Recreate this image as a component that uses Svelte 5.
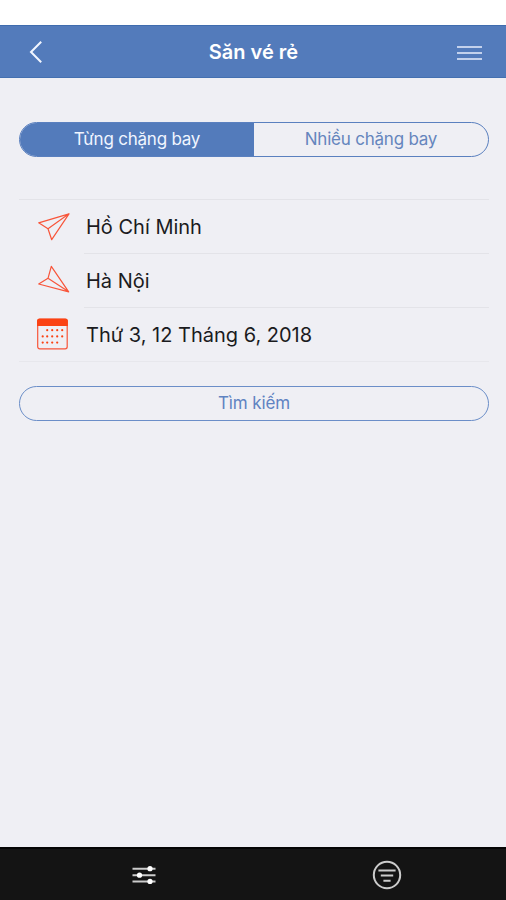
<script lang="ts">
    let mode = $state('single');

    const tabs = [
        { id: 'single', label: 'Từng chặng bay' },
        { id: 'multi', label: 'Nhiều chặng bay' },
    ];

    const rows = [
        { icon: 'depart', text: 'Hồ Chí Minh' },
        { icon: 'arrive', text: 'Hà Nội' },
        { icon: 'calendar', text: 'Thứ 3, 12 Tháng 6, 2018' },
    ];

    // columns and rows of the calendar icon's day dots
    const dots = [
        [10.5, 15.5, 20.5, 25.5],
        [6, 10.5, 15.5, 20.5, 25.5],
        [6, 10.5, 15.5, 20.5],
    ];
</script>

<div class="screen">
    <div class="status"></div>

    <header class="navbar">
        <button class="nav-btn back" aria-label="Back">
            <svg width="16" height="24" viewBox="0 0 16 24">
                <path d="M14.2 1.8 L4 12 L14.2 22.2" />
            </svg>
        </button>
        <h1>Săn vé rẻ</h1>
        <button class="nav-btn menu" aria-label="Menu">
            <span></span>
            <span></span>
            <span></span>
        </button>
    </header>

    <main>
        <div class="segment">
            {#each tabs as tab}
                <button class="tab" class:active={mode === tab.id} onclick={() => mode = tab.id}>{tab.label}</button>
            {/each}
        </div>

        <div class="list">
            {#each rows as row}
                <div class="row">
                    <svg class="icon" width="34" height="34" viewBox="0 0 34 34" aria-hidden="true">
                        {#if row.icon === 'depart'}
                            <path d="M33 3.8 L2.7 12.8 L12 18.7 L15.7 29.7 Z M12 18.7 L33 3.8" />
                        {:else if row.icon === 'arrive'}
                            <path d="M32.7 27.8 L2.7 20 L12 14.3 L15.3 2.3 Z M12 14.3 L32.7 27.8" />
                        {:else}
                            <rect x="1.7" y="2.4" width="29.5" height="29.4" rx="2" />
                            <path class="fill" d="M1 8.9 V4.1 Q1 1.6 3.5 1.6 H29.4 Q31.9 1.6 31.9 4.1 V8.9 Z" />
                            {#each dots as line, i}
                                {#each line as x}
                                    <circle class="fill" cx={x + 0.7} cy={13.2 + i * 6.2} r="1.1" />
                                {/each}
                            {/each}
                        {/if}
                    </svg>
                    <div class="value">{row.text}</div>
                </div>
            {/each}
        </div>

        <button class="search">Tìm kiếm</button>
    </main>

    <footer class="toolbar">
        <button class="tool" aria-label="Adjust">
            <svg width="26" height="20" viewBox="0 0 26 20">
                <path d="M1.5 3.7 H24.5 M1.5 10.2 H24.5 M1.5 16.4 H24.5" />
                <circle class="knob" cx="19" cy="3.7" r="2.6" />
                <circle class="knob" cx="8.5" cy="10.2" r="2.6" />
                <circle class="knob" cx="19" cy="16.4" r="2.6" />
            </svg>
        </button>
        <button class="tool" aria-label="Filter">
            <svg width="30" height="30" viewBox="0 0 30 30">
                <circle cx="15" cy="15" r="13.2" />
                <path d="M6.4 10.6 H23.6 M8.8 15.6 H21.2 M11.4 20.7 H18.6" />
            </svg>
        </button>
    </footer>
</div>

<style>
    :global(body) { margin: 0; }

    .screen {
        display: flex;
        flex-direction: column;
        width: 506px;
        height: 900px;
        background: #efeff4;
        font-family: Inter, "Liberation Sans", sans-serif;
        overflow: hidden;
    }

    button {
        font: inherit;
        margin: 0;
        padding: 0;
        border: 0;
        background: none;
        cursor: pointer;
    }

    svg {
        display: block;
        fill: none;
    }

    .status {
        height: 25px;
        background: #fff;
    }

    .navbar {
        display: flex;
        align-items: center;
        justify-content: space-between;
        box-sizing: border-box;
        height: 53px;
        padding: 0 24px 0 27px;
        background: #537bbb;
        border-top: 1px solid #3f6cae;
        border-bottom: 1px solid #4470b0;
    }

    .nav-btn { width: 25px; }

    .back path {
        stroke: #f2f6ff;
        stroke-width: 2;
    }

    h1 {
        margin: 0;
        padding-right: 2px;
        font-size: 20px;
        font-weight: 600;
        color: #fff;
    }

    .menu {
        display: flex;
        flex-direction: column;
        gap: 4px;
        padding-top: 2px;
    }

    .menu span {
        height: 2px;
        background: #c3d1ec;
    }

    main {
        flex: 1;
        padding: 44px 17px 0 19px;
    }

    .segment {
        display: flex;
        box-sizing: border-box;
        height: 35px;
        border: 1px solid #5a80bf;
        border-radius: 18px;
        overflow: hidden;
    }

    .tab {
        flex: 1;
        padding-bottom: 2px;
        font-size: 17px;
        letter-spacing: -.22px;
        color: #6585bd;
    }

    .tab.active {
        background: #537bbb;
        color: #f0f5ff;
    }

    .list {
        margin-top: 42px;
        border-top: 1px solid #e3e3e8;
        border-bottom: 1px solid #e7e7ec;
    }

    .row {
        display: flex;
        align-items: center;
        height: 53.8px;
        padding-left: 17px;
    }

    .icon path, .icon rect {
        stroke: #f8553a;
        stroke-width: 1.2;
        stroke-linejoin: round;
    }

    .icon .fill {
        fill: #fb4213;
        stroke: none;
    }

    .value {
        display: flex;
        align-items: center;
        flex: 1;
        box-sizing: border-box;
        height: 100%;
        margin-left: 14px;
        padding: 2px 0 0 2px;
        border-bottom: 1px solid #e3e3e8;
        font-size: 20px;
        color: #1b1b1e;
    }

    .row:last-child .value { border-bottom: none; }

    .search {
        width: 100%;
        box-sizing: border-box;
        height: 35px;
        margin-top: 24px;
        padding-bottom: 2px;
        border: 1px solid #6b8ec8;
        border-radius: 18px;
        font-size: 17px;
        letter-spacing: -.1px;
        color: #5f83c2;
    }

    .toolbar {
        display: flex;
        align-items: center;
        gap: 215px;
        box-sizing: border-box;
        height: 53px;
        padding-left: 131px;
        background: #141414;
        border-top: 2px solid #050505;
    }

    .tool path, .tool circle {
        stroke: #ccc;
        stroke-width: 2;
    }

    .tool .knob {
        fill: #fff;
        stroke: none;
    }
</style>
